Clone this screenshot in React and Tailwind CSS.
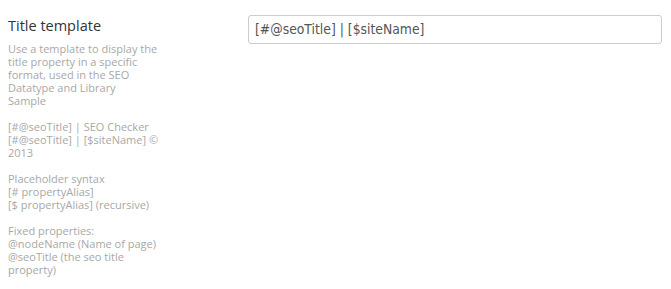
import React from "react";

const groups = [
  [
    "Use a template to display the",
    "title property in a specific",
    "format, used in the SEO",
    "Datatype and Library",
    "Sample",
  ],
  ["[#@seoTitle] | SEO Checker", "[#@seoTitle] | [$siteName] ©", "2013"],
  ["Placeholder syntax", "[# propertyAlias]", "[$ propertyAlias] (recursive)"],
  ["Fixed properties:", "@nodeName (Name of page)", "@seoTitle (the seo title", "property)"],
];

const App = () => {
  return (
    <div className="w-[671px] h-[289px] bg-white flex overflow-hidden" style={{ fontFamily: '"Open Sans", sans-serif' }}>
      <div className="w-[240px] pl-2 pt-[16px] shrink-0">
        <h3 className="text-[14.5px] leading-[20px] text-[#333]">Title template</h3>
        <div className="mt-[6px] text-[11px] leading-[13px] text-[#a8a8a8] flex flex-col gap-[13px]">
          {groups.map((group, i) => (
            <p key={i}>
              {group.map((l, j) => (
                <span key={j} className="block whitespace-nowrap">{l}</span>
              ))}
            </p>
          ))}
        </div>
      </div>
      <div className="pl-2 pt-[15px]">
        <div
          className="w-[414px] h-[29px] border border-[#cccccc] rounded-[3px] px-[6px] flex items-center text-[13.8px] text-[#555]"
          style={{ fontFamily: '"DejaVu Sans", sans-serif', fontStretch: "condensed" }}
        >
          [#@seoTitle] | [$siteName]
        </div>
      </div>
    </div>
  );
};

export default App;
